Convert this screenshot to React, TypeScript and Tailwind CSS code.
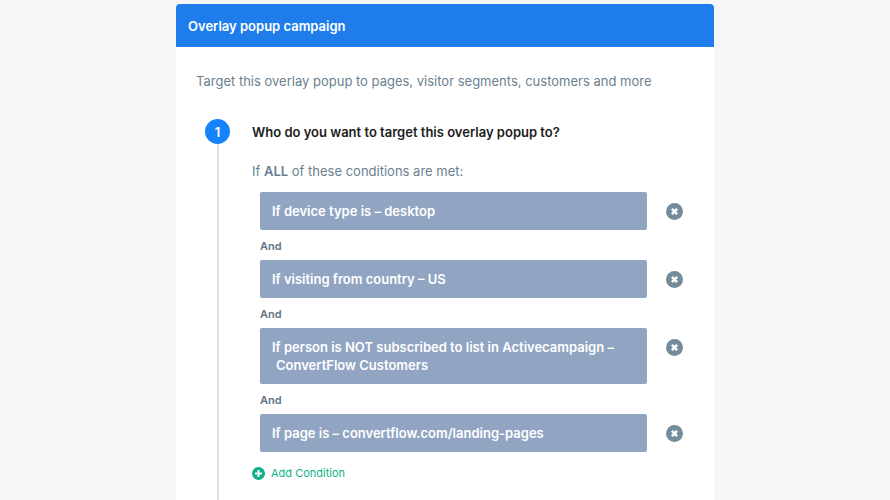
import { useState } from "react";

type Condition = {
  id: number;
  text: string;
  detail?: string;
};

const initialConditions: Condition[] = [
  { id: 1, text: "If device type is – desktop" },
  { id: 2, text: "If visiting from country – US" },
  {
    id: 3,
    text: "If person is NOT subscribed to list in Activecampaign –",
    detail: "ConvertFlow Customers",
  },
  { id: 4, text: "If page is – convertflow.com/landing-pages" },
];

function RemoveIcon() {
  return (
    <svg viewBox="0 0 17 17" className="size-[17px]" aria-hidden="true">
      <circle cx="8.5" cy="8.5" r="8.5" fill="#748b9c" />
      <path
        d="M5.9 5.9l5.2 5.2M11.1 5.9l-5.2 5.2"
        stroke="#fff"
        strokeWidth="2.5"
      />
    </svg>
  );
}

function AddIcon() {
  return (
    <svg viewBox="0 0 13 13" className="size-[13px]" aria-hidden="true">
      <circle cx="6.5" cy="6.5" r="6.5" fill="#12b08a" />
      <path d="M6.5 3v7M3 6.5h7" stroke="#fff" strokeWidth="2" />
    </svg>
  );
}

export default function App() {
  const [conditions, setConditions] = useState(initialConditions);

  const addCondition = () =>
    setConditions((prev) => [
      ...prev,
      { id: Date.now(), text: "If device type is – mobile" },
    ]);

  const removeCondition = (id: number) =>
    setConditions((prev) => prev.filter((c) => c.id !== id));

  return (
    <div className="flex min-h-screen flex-col items-center bg-[#f5f6f8] pt-1 font-['Inter',sans-serif] text-[13px] leading-[18px] text-[#6a7f90]">
      <main className="flex w-full max-w-[538px] grow flex-col rounded-t-sm bg-white">
        <header className="rounded-t-sm bg-[#1f7deb] px-3 pt-3 pb-[11px]">
          <h1 className="leading-5 font-semibold text-white">
            Overlay popup campaign
          </h1>
        </header>

        <div className="flex grow flex-col px-5 pt-6">
          <p className="leading-5">
            Target this overlay popup to pages, visitor segments, customers and
            more
          </p>

          <section className="mt-7 flex grow gap-[22px] pl-[9px]">
            <div className="flex flex-col items-center">
              <span className="flex size-[25px] items-center justify-center rounded-full bg-[#1583fb] font-semibold text-white">
                1
              </span>
              <span className="w-0.5 grow bg-[#dbe0e6]" />
            </div>

            <div className="grow pb-4">
              <h2 className="leading-[26px] font-semibold text-[#1c1c1c]">
                Who do you want to target this overlay popup to?
              </h2>
              <p className="mt-4 leading-5">
                If <b className="font-semibold">ALL</b> of these conditions are
                met:
              </p>

              <ul className="mt-[11px] pr-[11px] pl-2">
                {conditions.map((c, i) => (
                  <li key={c.id}>
                    {i > 0 && (
                      <div className="pt-[7px] pb-[5px] text-[11px] font-semibold text-[#5f7486]">
                        And
                      </div>
                    )}
                    <div className="flex items-start gap-[19px]">
                      <div className="grow rounded-xs bg-[#91a5c3] px-3 py-[10px] font-semibold text-white">
                        {c.text}
                        {c.detail && <div className="pl-1">{c.detail}</div>}
                      </div>
                      <button
                        type="button"
                        aria-label={`Remove condition: ${c.text}`}
                        onClick={() => removeCondition(c.id)}
                        className="mt-[11px] shrink-0"
                      >
                        <RemoveIcon />
                      </button>
                    </div>
                  </li>
                ))}
              </ul>

              <button
                type="button"
                onClick={addCondition}
                className="mt-3 flex items-center gap-1.5 text-[11px] text-[#12b08a]"
              >
                <AddIcon />
                Add Condition
              </button>
            </div>
          </section>
        </div>
      </main>
    </div>
  );
}
